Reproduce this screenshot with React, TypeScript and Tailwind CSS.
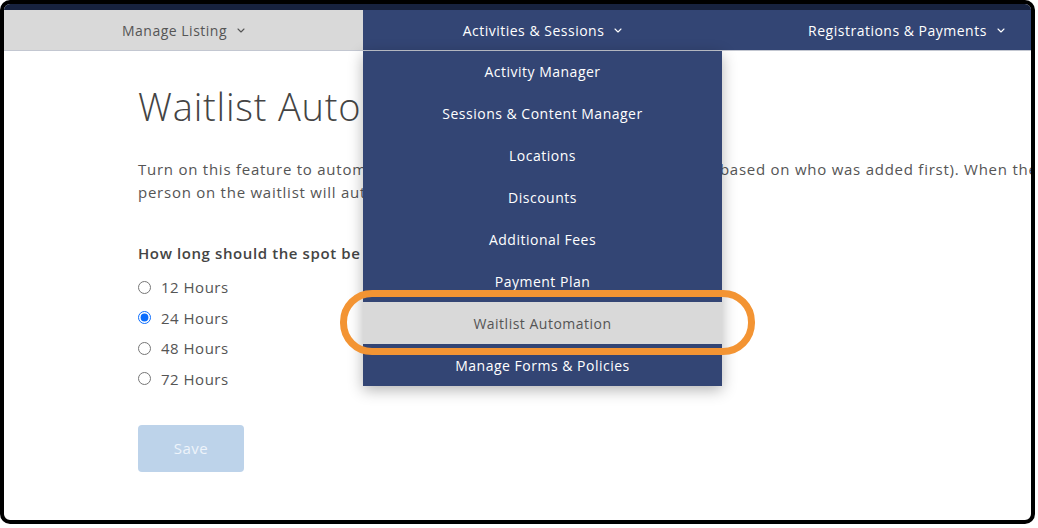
import React from 'react'

const font = { fontFamily: '"Open Sans", "DejaVu Sans", sans-serif' }

const Chevron: React.FC<{ className?: string }> = ({ className }) => (
  <svg width="8" height="5" viewBox="0 0 8 5" fill="none" className={className}>
    <polyline points="1,1 4,4 7,1" stroke="currentColor" strokeWidth="1.1" strokeLinecap="round" strokeLinejoin="round" />
  </svg>
)

const menuItems = [
  'Activity Manager',
  'Sessions & Content Manager',
  'Locations',
  'Discounts',
  'Additional Fees',
  'Payment Plan',
  'Waitlist Automation',
  'Manage Forms & Policies',
]

const hours = ['12 Hours', '24 Hours', '48 Hours', '72 Hours']

export default function App() {
  return (
    <div className="w-[1038px] h-[528px] bg-white" style={font}>
      <div className="relative w-[1035px] h-[524px] border-4 border-black rounded-[10px] overflow-hidden bg-white flex flex-col">
        {/* top strip */}
        <div className="h-[6px] shrink-0 bg-[#17223f]" />

        {/* nav */}
        <nav className="h-[41px] shrink-0 flex border-b border-[#c3c7d1] text-[14px] tracking-[0.5px]">
          <div className="w-[359px] shrink-0 bg-[#d9d9d9] text-[#555] flex items-center justify-center gap-[10px]">
            Manage Listing <Chevron />
          </div>
          <div className="w-[359px] shrink-0 bg-[#334574] text-white flex items-center justify-center gap-[10px]">
            Activities &amp; Sessions <Chevron />
          </div>
          <div className="w-[369px] shrink-0 bg-[#334574] text-white flex items-center justify-center gap-[10px]">
            Registrations &amp; Payments <Chevron />
          </div>
        </nav>

        {/* content */}
        <main className="pl-[134px] pt-[33px] whitespace-nowrap">
          <h1 className="text-[38px] font-light tracking-[0.8px] text-[#444] leading-[44px]">Waitlist Automation</h1>
          <p className="mt-[30px] text-[15px] tracking-[0.75px] leading-[23px] text-[#555]">
            <span className="block">
              Turn on this feature to automatically hold a spot for people on the waitlist (based on who was added first). When the spot opens up, the next
            </span>
            <span className="block">
              person on the waitlist will automatically receive the spot.
            </span>
          </p>
          <h2 className="mt-[38px] text-[15px] font-semibold tracking-[0.6px] text-[#444] leading-[22px]">
            How long should the spot be held for the next person on the waitlist?
          </h2>
          <div className="mt-[8px] flex flex-col">
            {hours.map((h) => (
              <label key={h} className="h-[30.5px] flex items-center gap-[10px] text-[15px] tracking-[0.5px] text-[#555]">
                <input
                  type="radio"
                  name="hours"
                  defaultChecked={h === '24 Hours'}
                  className="w-[13px] h-[13px] m-0 accent-[#0b6dfd]"
                />
                {h}
              </label>
            ))}
          </div>
          <button className="mt-[31px] w-[106px] h-[47px] rounded-[4px] bg-[#bdd3ea] text-[#eef4fb] text-[15px] tracking-[0.5px]">
            Save
          </button>
        </main>

        {/* dropdown */}
        <div className="absolute left-[359px] top-[47px] w-[359px] bg-[#334574] shadow-[0_4px_14px_rgba(0,0,0,0.3)] flex flex-col text-[14px] tracking-[0.5px]">
          {menuItems.map((item) => (
            <div
              key={item}
              className={
                item === 'Waitlist Automation'
                  ? 'h-[41.9px] flex items-center justify-center bg-[#d9d9d9] text-[#555]'
                  : 'h-[41.9px] flex items-center justify-center text-white'
              }
            >
              {item}
            </div>
          ))}
        </div>

        {/* highlight ring */}
        <div className="absolute left-[336px] top-[286px] w-[415px] h-[65px] rounded-[32px] border-[7px] border-[#f39433]" />
      </div>
    </div>
  )
}
